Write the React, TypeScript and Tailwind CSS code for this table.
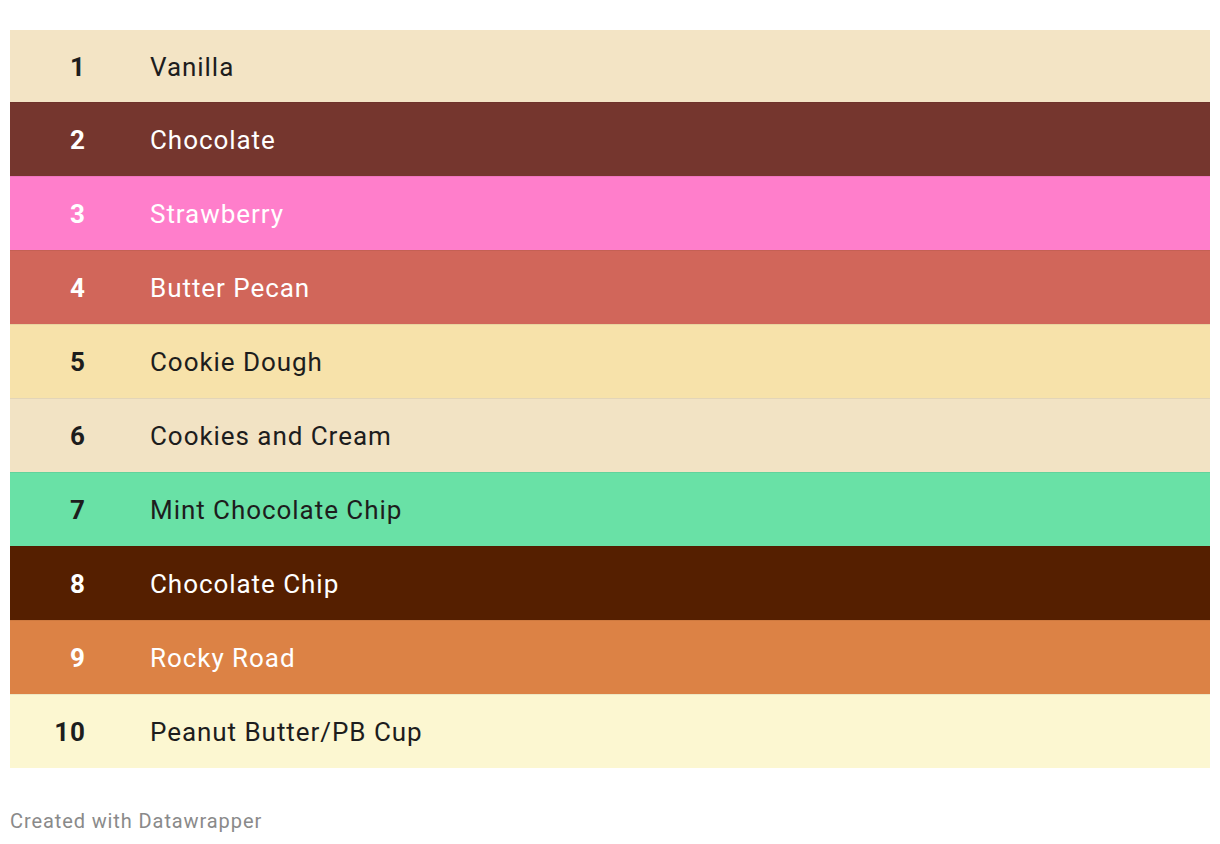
import React from "react";

const rows = [
  { n: 1, name: "Vanilla", bg: "bg-[#f3e4c5]", fg: "text-[#1d1d1d]", first: true },
  { n: 2, name: "Chocolate", bg: "bg-[#75362e]", fg: "text-white" },
  { n: 3, name: "Strawberry", bg: "bg-[#ff7ecb]", fg: "text-white" },
  { n: 4, name: "Butter Pecan", bg: "bg-[#d1665a]", fg: "text-white" },
  { n: 5, name: "Cookie Dough", bg: "bg-[#f7e2aa]", fg: "text-[#1d1d1d]" },
  { n: 6, name: "Cookies and Cream", bg: "bg-[#f2e3c4]", fg: "text-[#1d1d1d]" },
  { n: 7, name: "Mint Chocolate Chip", bg: "bg-[#69e1a6]", fg: "text-[#1d1d1d]" },
  { n: 8, name: "Chocolate Chip", bg: "bg-[#551f00]", fg: "text-white" },
  { n: 9, name: "Rocky Road", bg: "bg-[#dc8245]", fg: "text-white" },
  { n: 10, name: "Peanut Butter/PB Cup", bg: "bg-[#fcf7d1]", fg: "text-[#1d1d1d]" },
];

export default function App() {
  return (
    <div className="w-[1220px] h-[844px] bg-white px-[10px] pt-[30px]" style={{ fontFamily: "Roboto, 'Liberation Sans', sans-serif" }}>
      <div className="flex flex-col">
        {rows.map((r) => (
          <div
            key={r.n}
            className={`flex items-center pt-[2px] ${r.bg} ${r.fg} ${r.first ? "h-[72px]" : "h-[74px] border-t border-black/[0.06]"}`}
          >
            <div className="w-[76px] text-right text-[26px] font-bold tracking-[1px]">{r.n}</div>
            <div className="pl-[64px] text-[26px] tracking-[0.95px]">{r.name}</div>
          </div>
        ))}
      </div>
      <div className="mt-[38px] text-[20px] tracking-[0.9px] text-[#8a8a8a]">Created with Datawrapper</div>
    </div>
  );
}
